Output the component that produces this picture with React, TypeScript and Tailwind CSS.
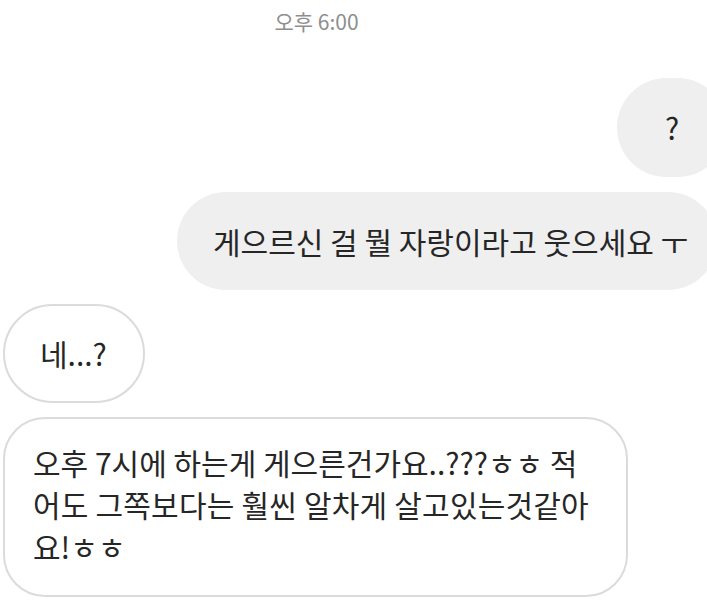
import React from 'react';

const App: React.FC = () => {
  return (
    <div className="w-[707px] h-[600px] overflow-hidden bg-white font-['Noto_Sans_CJK_KR',sans-serif] text-[#262626]">
      <div className="h-[44px] mr-[74px] flex items-center justify-center text-[21px] text-[#8e8e8e]">오후 6:00</div>

      <div className="mt-[34px] flex flex-col">
        <div className="flex justify-end mr-[-20px]">
          <div className="w-[110px] h-[99px] rounded-full bg-[#efefef] flex items-center justify-center text-[30px]">
            ?
          </div>
        </div>

        <div className="mt-[15px] flex justify-end mr-[-10px]">
          <div className="w-[540px] h-[98px] rounded-full bg-[#efefef] flex items-center pl-[36px] text-[30px] whitespace-nowrap">
            게으르신 걸 뭘 자랑이라고 웃으세요 ㅜ
          </div>
        </div>

        <div className="mt-[14px] ml-[3px] flex">
          <div className="w-[142px] h-[99px] rounded-full border-2 border-[#dbdbdb] flex items-center pl-[35px] text-[30px]">
            네...?
          </div>
        </div>

        <div className="mt-[14px] ml-[3px] flex">
          <div className="w-[625px] h-[180px] rounded-[42px] border-2 border-[#dbdbdb] pl-[28px] pt-[22px] text-[30px] leading-[42px] whitespace-nowrap">
            <div>오후 7시에 하는게 게으른건가요..???ㅎㅎ 적</div>
            <div className="tracking-[0.2px]">어도 그쪽보다는 훨씬 알차게 살고있는것같아</div>
            <div>요!ㅎㅎ</div>
          </div>
        </div>
      </div>
    </div>
  );
};

export default App;
